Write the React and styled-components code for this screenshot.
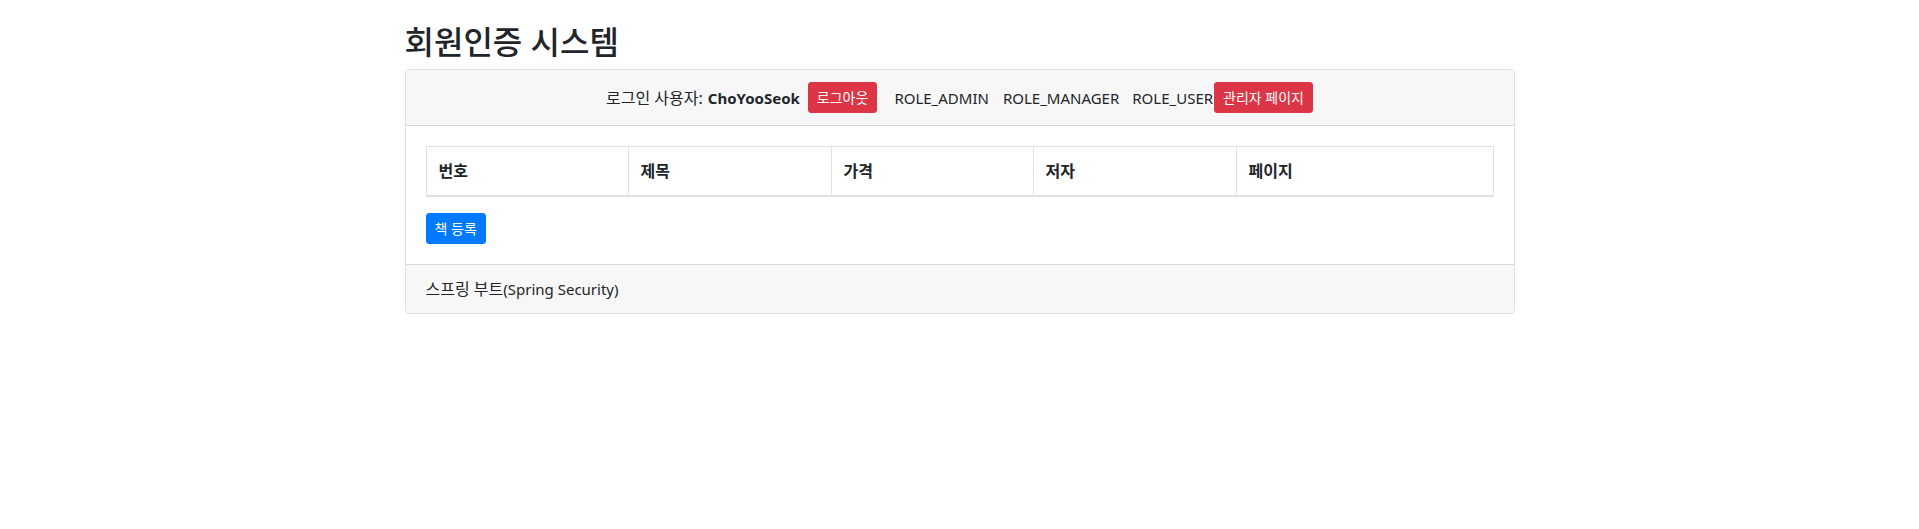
import React from "react";
import styled, { createGlobalStyle } from "styled-components";

const GlobalStyle = createGlobalStyle`
  *, *::before, *::after { box-sizing: border-box; }
  html, body { margin: 0; padding: 0; background: #fff; }
  body {
    font-family: "Noto Sans", "Noto Sans CJK KR", sans-serif;
    font-size: 16px;
    line-height: 1.5;
    color: #212529;
  }
`;

const Container = styled.div`
  width: 1140px;
  margin: 0 auto;
  padding: 23px 15px 0;
`;

const Title = styled.h2`
  margin: 0 0 8px;
  font-size: 32px;
  font-weight: 500;
  line-height: 1.2;
`;

const Card = styled.div`
  border: 1px solid rgba(0, 0, 0, 0.125);
  border-radius: 4px;
  background: #fff;
  overflow: hidden;
`;

const CardHeader = styled.div`
  display: flex;
  justify-content: center;
  align-items: center;
  padding: 12px 20px;
  background: #f7f7f7;
  border-bottom: 1px solid rgba(0, 0, 0, 0.125);
  white-space: nowrap;
`;

/* Latin runs: slightly smaller so their widths follow the reference's UI font */
const Latin = styled.span`
  font-size: 15px;
  font-weight: ${(p) => (p.$bold ? 700 : 400)};
  margin-left: ${(p) => p.$gap || 0}px;
`;

const Button = styled.button`
  display: inline-block;
  font-family: inherit;
  font-size: 14px;
  line-height: 1.5;
  font-weight: 400;
  padding: 4px 8px;
  border-radius: 3px;
  color: #fff;
  cursor: pointer;
  border: 1px solid ${(p) => (p.$variant === "primary" ? "#007bff" : "#dc3545")};
  background: ${(p) => (p.$variant === "primary" ? "#007bff" : "#dc3545")};
  margin-left: ${(p) => p.$ml || 0}px;
`;

const CardBody = styled.div`
  padding: 20px;
`;

const Table = styled.table`
  width: 100%;
  border-collapse: collapse;
  margin-bottom: 16px;
  color: #212529;
`;

const Th = styled.th`
  width: ${(p) => (p.$w ? `${p.$w}px` : "auto")};
  padding: 12px;
  text-align: left;
  font-weight: 700;
  vertical-align: bottom;
  border: 1px solid #dee2e6;
  border-bottom-width: 2px;
`;

const CardFooter = styled.div`
  padding: 12px 20px;
  background: #f7f7f7;
  border-top: 1px solid rgba(0, 0, 0, 0.125);
`;

const columns = [
  { label: "번호", w: 202 },
  { label: "제목", w: 203 },
  { label: "가격", w: 202 },
  { label: "저자", w: 203 },
  { label: "페이지" },
];

const roles = [
  { name: "ROLE_ADMIN", gap: 17 },
  { name: "ROLE_MANAGER", gap: 14 },
  { name: "ROLE_USER", gap: 13 },
];

export default function App() {
  return (
    <>
      <GlobalStyle />
      <Container>
        <Title>회원인증 시스템</Title>
        <Card>
          <CardHeader>
            <span>로그인 사용자:</span>
            <Latin $bold $gap={5}>ChoYooSeok</Latin>
            <Button $ml={8}>로그아웃</Button>
            {roles.map((r) => (
              <Latin key={r.name} $gap={r.gap}>
                {r.name}
              </Latin>
            ))}
            <Button $ml={1}>관리자 페이지</Button>
          </CardHeader>
          <CardBody>
            <Table>
              <thead>
                <tr>
                  {columns.map((c) => (
                    <Th key={c.label} $w={c.w}>
                      {c.label}
                    </Th>
                  ))}
                </tr>
              </thead>
            </Table>
            <Button $variant="primary">책 등록</Button>
          </CardBody>
          <CardFooter>
            스프링 부트<Latin>(Spring Security)</Latin>
          </CardFooter>
        </Card>
      </Container>
    </>
  );
}
